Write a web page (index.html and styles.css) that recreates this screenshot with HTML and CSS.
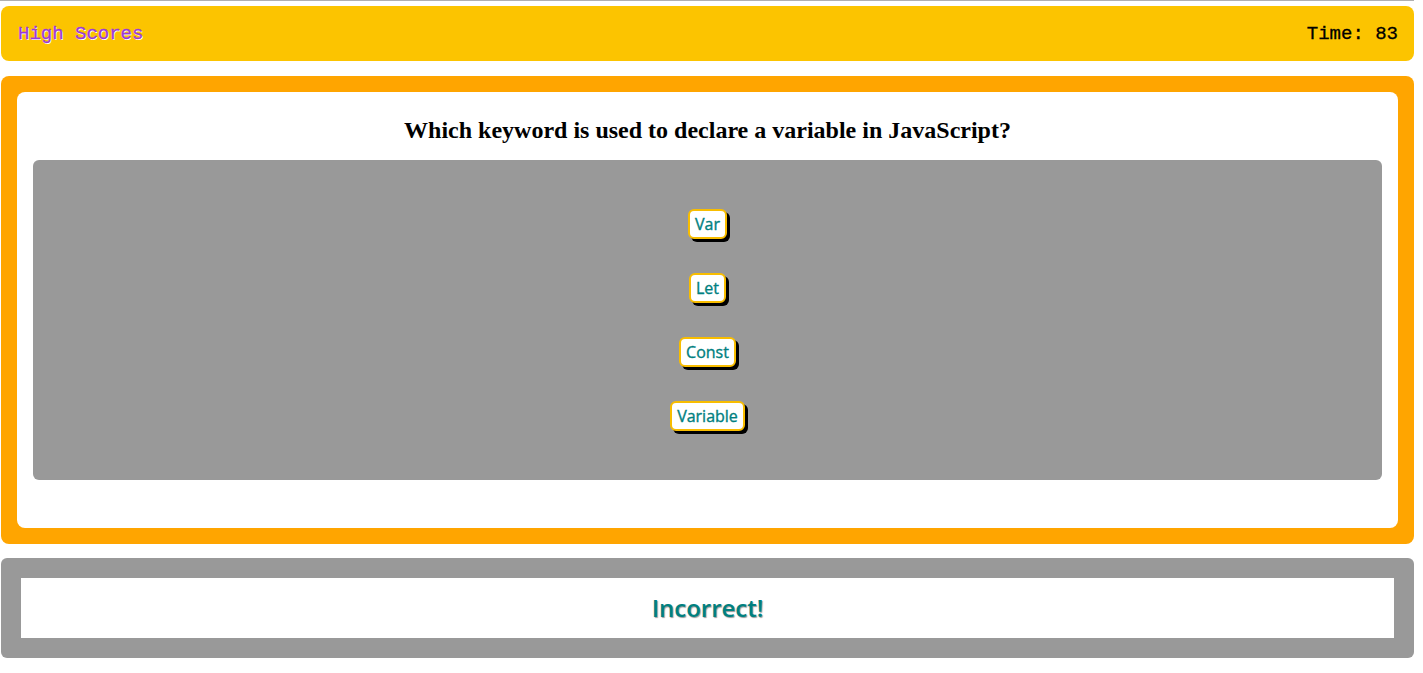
FILE: index.html
```html
<!DOCTYPE html>
<html>
<head>
<meta charset="utf-8">
<link rel="stylesheet" href="styles.css">
</head>
<body>
<div class="topline"></div>
<div class="page">
  <header class="header">
    <a class="scores">High Scores</a>
    <span class="time">Time: 83</span>
  </header>
  <main class="quiz">
    <div class="card">
      <h2 class="question">Which keyword is used to declare a variable in JavaScript?</h2>
      <div class="answers">
        <button class="answer">Var</button>
        <button class="answer">Let</button>
        <button class="answer">Const</button>
        <button class="answer">Variable</button>
      </div>
    </div>
  </main>
  <section class="feedback">
    <div class="feedback-inner">Incorrect!</div>
  </section>
</div>
</body>
</html>
```

FILE: styles.css
```css
html, body {
  margin: 0;
  padding: 0;
  background: #fff;
}
.topline {
  height: 1px;
  margin: 0 9px 0 0;
  background: #b0b0b0;
}
.page {
  margin: 5px 9px 0 1px;
  display: flex;
  flex-direction: column;
}
.header {
  height: 55px;
  background: #fcc400;
  border-radius: 8px;
  display: flex;
  align-items: center;
  justify-content: space-between;
  padding: 0 16px 0 17px;
  font-family: "Liberation Mono", "Courier New", monospace;
  font-size: 19px;
}
.scores {
  color: #9b3ad6;
  text-shadow: 1px 1px 0 #fff;
  padding-top: 1px;
  -webkit-text-stroke: 0.3px #9b3ad6;
}
.time {
  color: #000;
  padding-top: 1px;
  -webkit-text-stroke: 0.3px #000;
}
.quiz {
  margin-top: 15px;
  background: #ffa500;
  border-radius: 8px;
  padding: 16px;
}
.card {
  background: #fff;
  border-radius: 8px;
  padding: 16px 16px 48px;
}
.question {
  margin: 6px 0 14px;
  text-align: center;
  font-family: "Liberation Serif", "Times New Roman", serif;
  font-size: 24px;
  font-weight: bold;
  line-height: 32px;
}
.answers {
  background: #999;
  border-radius: 6px;
  height: 320px;
  box-sizing: border-box;
  padding-top: 49px;
  display: flex;
  flex-direction: column;
  align-items: center;
  gap: 34px;
}
.answer {
  height: 30px;
  box-sizing: border-box;
  background: #fff;
  border: 2px solid #f8bd00;
  border-radius: 6px;
  box-shadow: 3px 3px 0 #000;
  color: #008080;
  font-family: "Open Sans", "DejaVu Sans", sans-serif;
  font-size: 16px;
  font-weight: 400;
  -webkit-text-stroke: 0.35px #008080;
  padding: 0 5px;
  margin: 0;
}
.feedback {
  margin-top: 14px;
  background: #999;
  border-radius: 6px;
  padding: 20px;
}
.feedback-inner {
  background: #fff;
  height: 60px;
  display: flex;
  align-items: center;
  justify-content: center;
  padding-bottom: 1px;
  box-sizing: border-box;
  color: #008080;
  font-family: "Open Sans", "DejaVu Sans", sans-serif;
  font-size: 24px;
  font-weight: 600;
  text-shadow: 1px 1px 1px #999;
}
```
